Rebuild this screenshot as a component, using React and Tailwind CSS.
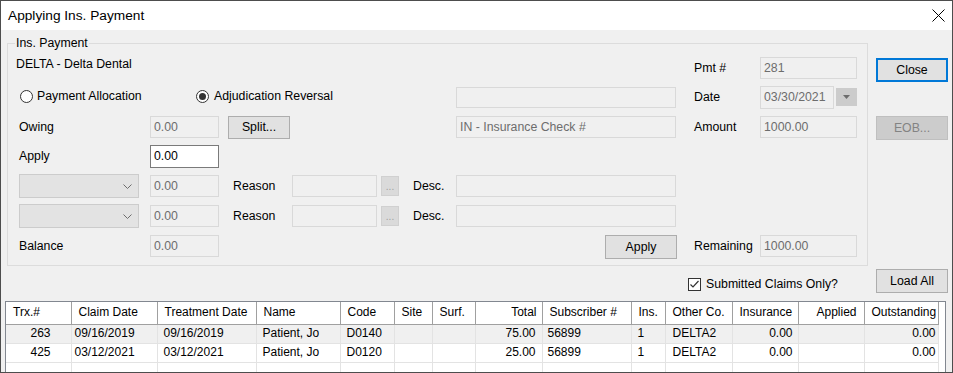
import React from "react";

const Box = ({ w, value = "", active = false, h = "h-[22px]" }) => (
    <div
        className={`${w} ${h} flex items-center pl-[3px] border whitespace-nowrap overflow-hidden ${
            active ? "bg-white border-[#7a7a7a] text-black" : "bg-[#f0f0f0] border-[#d9d9d9] text-[#6d6d6d]"
        }`}
    >
        {value}
    </div>
);

const Btn = ({ children, className = "" }) => (
    <button className={`flex items-center justify-center border border-[#adadad] bg-[#e1e1e1] text-black ${className}`}>
        {children}
    </button>
);

const Radio = ({ checked }) => (
    <span className="w-[13px] h-[13px] rounded-full border border-[#333333] bg-white flex items-center justify-center shrink-0">
        {checked && <span className="w-[7px] h-[7px] rounded-full bg-[#333333]" />}
    </span>
);

const Combo = () => (
    <div className="ml-[11px] w-[120px] h-[24px] border border-[#cccccc] bg-[#e3e3e3] flex items-center justify-end pr-[6px]">
        <svg width="9" height="5" viewBox="0 0 9 5">
            <path d="M0.5 0.5 L4.5 4.5 L8.5 0.5" fill="none" stroke="#6d6d6d" />
        </svg>
    </div>
);

const RightField = ({ label, children }) => (
    <div className="ml-auto flex items-center">
        <span className="w-[66px]">{label}</span>
        {children}
    </div>
);

const ReasonRow = ({ mt }) => (
    <div className={`${mt} h-[22px] flex items-center`}>
        <Combo />
        <div className="ml-[11px]">
            <Box w="w-[69px]" value="0.00" />
        </div>
        <span className="ml-[14px] w-[59px]">Reason</span>
        <Box w="w-[85px]" />
        <div className="ml-[4px] w-[18px] h-[20px] bg-[#dadada] border border-[#d0d0d0] flex items-center justify-center text-[#a0a0a0] text-[10px]">
            ...
        </div>
        <span className="ml-[14px] w-[43px]">Desc.</span>
        <Box w="w-[220px]" />
    </div>
);

const columns = [
    { key: "trx", label: "Trx.#", w: 65, data: "text-right pr-[20px]" },
    { key: "claim", label: "Claim Date", w: 86, data: "pl-[3px]" },
    { key: "treat", label: "Treatment Date", w: 99, data: "pl-[6px]" },
    { key: "name", label: "Name", w: 84, data: "pl-[6px]" },
    { key: "code", label: "Code", w: 54, data: "pl-[6px]" },
    { key: "site", label: "Site", w: 38, data: "pl-[6px]" },
    { key: "surf", label: "Surf.", w: 43, data: "pl-[6px]" },
    { key: "total", label: "Total", w: 67, data: "text-right pr-[6px]", head: "text-right pr-[5px]" },
    { key: "sub", label: "Subscriber #", w: 89, data: "pl-[5px]" },
    { key: "ins", label: "Ins.", w: 34, data: "pl-[6px]" },
    { key: "other", label: "Other Co.", w: 67, data: "pl-[7px]" },
    { key: "insurance", label: "Insurance", w: 66, data: "text-right pr-[5px]" },
    { key: "applied", label: "Applied", w: 66, data: "text-right pr-[7px]", head: "text-right pr-[7px]" },
    { key: "out", label: "Outstanding", w: 74, data: "text-right pr-[2px]" },
];

const rows = [
    { trx: "263", claim: "09/16/2019", treat: "09/16/2019", name: "Patient, Jo", code: "D0140", total: "75.00", sub: "56899", ins: "1", other: "DELTA2", insurance: "0.00", out: "0.00" },
    { trx: "425", claim: "03/12/2021", treat: "03/12/2021", name: "Patient, Jo", code: "D0120", total: "25.00", sub: "56899", ins: "1", other: "DELTA2", insurance: "0.00", out: "0.00" },
    {},
];

export default function App() {
    return (
        <div className="w-[953px] h-[373px] border border-[#4d4d4d] bg-[#f0f0f0] flex flex-col overflow-hidden text-[12px] leading-[15px] text-black font-['Liberation_Sans',Arial,sans-serif]">
            {/* title bar */}
            <div className="h-[29px] shrink-0 bg-white flex items-center justify-between pl-[7px] pr-[7px]">
                <span className="text-[13.7px]">Applying Ins. Payment</span>
                <svg width="13" height="13" viewBox="0 0 13 13">
                    <path d="M0.5 0.5 L12.5 12.5 M12.5 0.5 L0.5 12.5" stroke="#000" strokeWidth="1" />
                </svg>
            </div>

            <div className="flex-1 flex flex-col px-[4px] min-h-0">
                {/* top section */}
                <div className="flex mt-[6px] pl-[2px] text-[12.3px]">
                    <fieldset className="w-[861px] h-[230px] border border-[#dcdcdc] shrink-0">
                        <legend className="ml-[7px] px-[1px] leading-[14px]">Ins. Payment</legend>
                        <div className="flex flex-col pr-[10px]">
                            <div className="mt-[7px] h-[22px] flex">
                                <span className="ml-[8px] self-start">DELTA - Delta Dental</span>
                                <RightField label="Pmt #">
                                    <Box w="w-[97px]" value="281" />
                                </RightField>
                            </div>

                            <div className="mt-[7px] h-[22px] flex items-center">
                                <div className="ml-[12px] w-[176px] flex items-center -mt-[2px]">
                                    <Radio />
                                    <span className="ml-[4px]">Payment Allocation</span>
                                </div>
                                <div className="w-[260px] flex items-center -mt-[2px]">
                                    <Radio checked />
                                    <span className="ml-[5px]">Adjudication Reversal</span>
                                </div>
                                <Box w="w-[220px]" h="h-[21px]" />
                                <RightField label="Date">
                                    <Box w="w-[74px]" value="03/30/2021" h="h-[23px]" />
                                    <div className="ml-[2px] w-[21px] h-[18px] bg-[#cccccc] flex items-center justify-center">
                                        <svg width="7" height="4" viewBox="0 0 7 4">
                                            <path d="M0 0 L7 0 L3.5 4 Z" fill="#6d6d6d" />
                                        </svg>
                                    </div>
                                </RightField>
                            </div>

                            <div className="mt-[8px] h-[22px] flex items-center">
                                <span className="ml-[11px] w-[131px]">Owing</span>
                                <Box w="w-[69px]" value="0.00" />
                                <Btn className="ml-[9px] w-[62px] h-[23px]">Split...</Btn>
                                <div className="ml-[166px]">
                                    <Box w="w-[220px]" value="IN - Insurance Check #" />
                                </div>
                                <RightField label="Amount">
                                    <Box w="w-[97px]" value="1000.00" />
                                </RightField>
                            </div>

                            <div className="mt-[7px] h-[22px] flex items-center">
                                <span className="ml-[11px] w-[131px]">Apply</span>
                                <Box w="w-[69px]" value="0.00" h="h-[23px]" active />
                            </div>

                            <ReasonRow mt="mt-[8px]" />
                            <ReasonRow mt="mt-[8px]" />

                            <div className="mt-[8px] h-[22px] flex items-center">
                                <span className="ml-[11px] w-[131px]">Balance</span>
                                <Box w="w-[69px]" value="0.00" />
                                <Btn className="ml-[386px] w-[72px] h-[24px] mt-[2px]">Apply</Btn>
                                <RightField label="Remaining">
                                    <Box w="w-[97px]" value="1000.00" />
                                </RightField>
                            </div>
                        </div>
                    </fieldset>

                    <div className="ml-[8px] flex flex-col">
                        <button className="mt-[22px] w-[72px] h-[24px] border-2 border-[#0078d7] bg-[#e1e1e1] flex items-center justify-center">
                            Close
                        </button>
                        <button className="mt-[34px] w-[72px] h-[24px] border border-[#bfbfbf] bg-[#cccccc] text-[#838383] flex items-center justify-center">
                            EOB...
                        </button>
                    </div>
                </div>

                {/* checkbox + load all */}
                <div className="mt-[3px] h-[24px] shrink-0 flex items-center justify-end text-[12.3px]">
                    <label className="w-[188px] mt-[6px] flex items-center">
                        <span className="w-[13px] h-[13px] border border-[#333333] bg-white flex items-center justify-center">
                            <svg width="11" height="11" viewBox="0 0 11 11">
                                <path d="M1.5 5.5 L4 8 L9.5 2" fill="none" stroke="#333333" strokeWidth="1.2" />
                            </svg>
                        </span>
                        <span className="ml-[5px]">Submitted Claims Only?</span>
                    </label>
                    <Btn className="w-[72px] h-[24px]">Load All</Btn>
                </div>

                {/* claims grid */}
                <div className="mt-[8px] mr-[2px] flex-1 min-h-0 overflow-hidden border border-b-0 border-[#828790] bg-white">
                    <table className="table-fixed border-collapse w-[932px]">
                        <colgroup>
                            {columns.map((c) => (
                                <col key={c.key} style={{ width: c.w }} />
                            ))}
                        </colgroup>
                        <thead>
                            <tr className="h-[22px]">
                                {columns.map((c) => (
                                    <th
                                        key={c.key}
                                        className={`font-normal p-0 border-r border-b border-[#a0a0a0] bg-white whitespace-nowrap overflow-hidden ${
                                            c.head ? c.head : "text-left pl-[7px]"
                                        }`}
                                    >
                                        {c.label}
                                    </th>
                                ))}
                            </tr>
                        </thead>
                        <tbody>
                            {rows.map((r, i) => (
                                <tr key={i} className={`h-[19px] ${i === 0 ? "bg-[#f0f0f0]" : "bg-white"}`}>
                                    {columns.map((c) => (
                                        <td
                                            key={c.key}
                                            className={`p-0 border-r border-b border-[#e3e3e3] whitespace-nowrap overflow-hidden ${c.data}`}
                                        >
                                            {r[c.key] || ""}
                                        </td>
                                    ))}
                                </tr>
                            ))}
                        </tbody>
                    </table>
                </div>
            </div>
        </div>
    );
}
